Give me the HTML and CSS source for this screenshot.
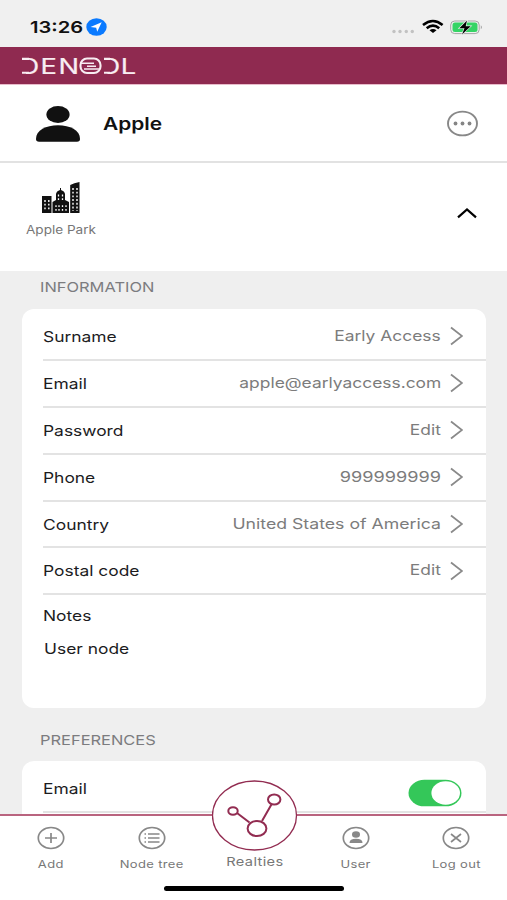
FILE: index.html
```html
<!DOCTYPE html>
<html lang="en">
<head>
<meta charset="utf-8">
<title>Denodl</title>
<link rel="stylesheet" href="styles.css">
</head>
<body>
<div class="screen">
  <div class="status">
    <div class="clock"><span class="time">13:26</span>
      <svg class="loc" viewBox="0 0 21 18" width="21" height="18"><ellipse cx="10.5" cy="9" rx="10.2" ry="8.7" fill="#0a7aff"/><path d="M4.5 9.1 15.7 4.3 11.2 13.8 10.2 9.8Z" fill="#fff"/></svg>
    </div>
    <svg viewBox="0 0 94 20" width="94" height="20">
      <g fill="#c2c2c2"><circle cx="3" cy="14.5" r="1.7"/><circle cx="9" cy="14.5" r="1.7"/><circle cx="15.3" cy="14.5" r="1.7"/><circle cx="21.3" cy="14.5" r="1.7"/></g>
      <g fill="none" stroke="#000" stroke-width="2.6"><path d="M32 8Q42 0 51.6 8"/><path d="M35.700 11.3Q42 6 48.200 11.3"/></g>
      <path d="M38.5 13.3Q42 10.8 45.5 13.3L42 16Z"/>
      <rect x="59.7" y="4" width="28.5" height="12.6" rx="4" fill="none" stroke="#a5a5a5"/>
      <rect x="61.500" y="5.6" width="25" height="9.4" rx="2.5" fill="#35d465"/>
      <path d="M89.8 8.2q2.3 2 0 4z" fill="#a5a5a5"/>
      <path d="M76 3.5 68.300 11.2H73.500L71 17.4 79.700 9.2H74.700Z" stroke="#f0f0f0" stroke-width="1.3" paint-order="stroke"/>
    </svg>
  </div>
  <header class="brand">
    <svg class="logo" viewBox="0 0 116 20" width="116" height="20" role="img" aria-label="DENODL">
      <text class="logo-text" transform="scale(1.3 1)" y="17.6" x="-1.2 15 28.8 61.2 76.7">DENDL</text>
      <path d="M-1 0H5V20H-1ZM81 0H86.500V20H81Z" fill="#8f2a50"/>
      <g fill="none" stroke="#f8edf2" stroke-width="2.100">
        <path d="M1 2.900H8M1 16.700H8M83 2.900H89M83 16.700H89"/>
        <rect x="59.500" y="2.500" width="20" height="14.500" rx="6.5"/>
        <path d="M60 7.2H73M66 10.2H75M63 13H79" stroke-width="1.4"/>
      </g>
    </svg>
  </header>
  <section class="profile">
    <svg viewBox="0 0 46 38" width="46" height="38" fill="#111"><ellipse cx="23" cy="9.5" rx="11.6" ry="8.5"/><path d="M1 34C1 25 11 20.3 23 20.3S45 25 45 34Q45 36.8 42 36.8H4Q1 36.8 1 34Z"/></svg>
    <h1><span class="wide">Apple</span></h1>
    <svg class="more" viewBox="0 0 32 27" width="32" height="27"><ellipse cx="16.500" cy="13.5" rx="14.5" ry="11.9" fill="none" stroke="#888" stroke-width="1.9"/><g fill="#858585"><circle cx="9.500" cy="13.5" r="1.9"/><circle cx="16.500" cy="13.5" r="1.9"/><circle cx="23.500" cy="13.5" r="1.9"/></g></svg>
  </section>
  <section class="place">
    <div class="park">
      <svg viewBox="0 0 38 32" width="38" height="32"><path fill="#111" d="M0 14H9.500V31H0ZM10.5 31V20L14 18V12Q14.500 9 18 8V6H19V8Q22.500 9 23 12V18L27 20V31ZM28.200 31V3Q32 1 37.500 0V31Z"/><g stroke="#fff" fill="none" stroke-dasharray="1.900 1.800"><path d="M3 18V29M6.800 18V29M31 6V29M35 6V29" stroke-width="1.400"/><path d="M14 23.200V29M17 23.200V29M20.500 23.200V29M24 23.200V29M16.500 12.500V18M20.500 12.500V18" stroke-width="1.300"/></g></svg>
      <span class="wide">Apple Park</span>
    </div>
    <svg class="up" viewBox="0 0 20 12" width="20" height="12"><path d="M1 10.300 10 2.500 19 10.300" fill="none" stroke="#000" stroke-width="2.200"/></svg>
  </section>
  <main>
    <h2><span class="wide">INFORMATION</span></h2>
    <div class="card info">
      <div class="row"><span class="wide">Surname</span><span class="value">Early Access</span><svg class="chev" viewBox="0 0 13 20"><path d="M1 1.500 12 10 1 18.500"/></svg></div>
      <div class="row"><span class="wide">Email</span><span class="value">apple@earlyaccess.com</span><svg class="chev" viewBox="0 0 13 20"><path d="M1 1.500 12 10 1 18.500"/></svg></div>
      <div class="row"><span class="wide">Password</span><span class="value">Edit</span><svg class="chev" viewBox="0 0 13 20"><path d="M1 1.500 12 10 1 18.500"/></svg></div>
      <div class="row"><span class="wide">Phone</span><span class="value digits">999999999</span><svg class="chev" viewBox="0 0 13 20"><path d="M1 1.500 12 10 1 18.500"/></svg></div>
      <div class="row"><span class="wide">Country</span><span class="value country">United States of America</span><svg class="chev" viewBox="0 0 13 20"><path d="M1 1.500 12 10 1 18.500"/></svg></div>
      <div class="row"><span class="wide">Postal code</span><span class="value">Edit</span><svg class="chev" viewBox="0 0 13 20"><path d="M1 1.500 12 10 1 18.500"/></svg></div>
      <div class="note"><span class="wide">Notes</span></div>
      <div class="note node"><span class="wide">User node</span></div>
    </div>
    <h2 class="second"><span class="wide">PREFERENCES</span></h2>
    <div class="card prefs">
      <div class="row"><span class="wide">Email</span>
        <svg class="switch" viewBox="0 0 54 28" width="54" height="28"><rect x=".5" y=".8" width="53" height="26.500" rx="16" ry="13.250" fill="#34c759"/><ellipse cx="37.700" cy="14" rx="14.300" ry="11.800" fill="#fff"/></svg>
      </div>
    </div>
  </main>
  <nav>
    <div class="tab"><svg viewBox="0 0 28 24" width="28" height="24"><ellipse cx="14" cy="12" rx="12.700" ry="10.500"/><path d="M8 12H20M14 7V17"/></svg><span>Add</span></div>
    <div class="tab"><svg viewBox="0 0 28 24" width="28" height="24"><ellipse cx="14" cy="12" rx="12.700" ry="10.500"/><path d="M10 8H21.500M10 12H21.500M10 16H21.500M6.500 8H8M6.500 12H8M6.500 16H8" stroke-width="1.400"/></svg><span>Node tree</span></div>
    <div class="tab main-tab"><svg viewBox="0 0 86 72" width="86" height="72"><ellipse cx="42.500" cy="36.500" rx="42" ry="34.500" fill="#fff" stroke-width="1.300"/><g stroke-width="2"><path d="M25 34 37.500 43.500M50 42 60 24.500"/><ellipse cx="21" cy="32" rx="4.700" ry="3.800"/><ellipse cx="62.200" cy="20.500" rx="6.200" ry="5.100"/><ellipse cx="45" cy="49.500" rx="9.400" ry="7.600"/></g></svg><span>Realties</span></div>
    <div class="tab"><svg viewBox="0 0 28 24" width="28" height="24"><ellipse cx="14" cy="12" rx="12.700" ry="10.500"/><g fill="#888" stroke="none"><ellipse cx="14" cy="8.500" rx="4" ry="3.300"/><path d="M7.500 17Q7.500 12.800 14 12.800T20.500 17Z"/></g></svg><span>User</span></div>
    <div class="tab"><svg viewBox="0 0 28 24" width="28" height="24"><ellipse cx="14" cy="12" rx="12.700" ry="10.500"/><path d="M9 8 19 16M19 8 9 16"/></svg><span>Log out</span></div>
    <i class="home"></i>
  </nav>
</div>
</body>
</html>
```

FILE: styles.css
```css
* { box-sizing: border-box; }
body { margin: 0; font-family: Inter, "Liberation Sans", sans-serif; color: #1c1c1e; background: #fff; }
svg { display: block; flex: none; }
h1, h2 { margin: 0; font-weight: 400; }
.screen { width: 507px; height: 900px; display: flex; flex-direction: column; overflow: hidden; }
.wide { display: inline-block; transform: scaleX(1.2); transform-origin: left center; white-space: nowrap; }

.status { height: 47px; flex: none; background: #f0f0f0; display: flex; justify-content: space-between; padding: 17px 22px 0 30px; }
.clock { display: flex; }
.time { width: 56px; font-size: 16.5px; font-weight: 600; line-height: 21px; color: #111; transform: scaleX(1.22); transform-origin: left center; }
.loc { margin-top: 1px; }

.brand { height: 38px; flex: none; background: #8f2a50; border-bottom: 1px solid #e8bccb; padding: 9px 0 0 21px; }
.logo { overflow: visible; }
.logo-text { font-size: 21px; font-weight: 400; fill: #f8edf2; stroke: #f8edf2; stroke-width: .2px; }

.profile { height: 78px; flex: none; border-bottom: 2px solid #e2e2e2; display: flex; align-items: center; padding: 0 29px 0 35px; }
.profile > svg:first-child { margin-top: 1px; }
h1 { margin: 1px 0 0 22px; font-size: 17.4px; font-weight: 600; line-height: 24px; color: #111; }
.more { margin-left: auto; }

.place { height: 108px; flex: none; display: flex; justify-content: space-between; padding: 19px 30px 0 26px; }
.park { display: flex; flex-direction: column; font-size: 11.3px; line-height: 16px; color: #777; }
.park svg { margin: 0 0 8px 16px; }
.up { margin-top: 25px; }

main { flex: 1; min-height: 0; overflow: hidden; background: #efefef; padding: 0 21px 0 22px; }
h2 { padding: 6px 0 0 18px; height: 37.5px; font-size: 13.7px; line-height: 20px; color: #7c7c7f; }
.second { padding-top: 22px; height: 53px; }
.card { background: #fff; border-radius: 12px; overflow: hidden; padding-left: 20.500px; font-size: 14.5px; }
.info { height: 399.5px; padding-top: 5.500px; }
.row { height: 46.9px; display: flex; align-items: center; border-bottom: 2px solid #e3e3e3; padding-right: 23px; }
.value { margin-left: auto; color: #7c7c7c; transform: scaleX(1.2); transform-origin: right center; white-space: nowrap; position: relative; top: -1px; }
.digits { transform: scaleX(1.25); }
.country { transform: scaleX(1.22); }
.chev { width: 13px; height: 20px; margin-left: 9px; fill: none; stroke: #8a8a8a; stroke-width: 1.8; }
.note { height: 33px; line-height: 33px; padding-top: 4px; }
.node { padding-left: 1px; }
.prefs { height: 70px; padding-top: 5px; }
.prefs .row { height: 47px; }
.switch { margin: 9px 1px 0 auto; }

nav { height: 86px; flex: none; position: relative; background: #fff; border-top: 2px solid #b9647f; display: grid; grid-template-columns: 102px 100px 105px 98px 102px; align-items: start; }
.tab { display: flex; flex-direction: column; align-items: center; padding-top: 10px; font-size: 10.8px; line-height: 14px; color: #777; }
.tab svg { fill: none; stroke: #888; stroke-width: 1.7; margin-bottom: 8px; }
.tab span { transform: scaleX(1.2); white-space: nowrap; letter-spacing: .3px; }
.main-tab { padding: 0; margin-top: -37px; font-size: 12.2px; }
.main-tab svg { stroke: #922c51; margin-bottom: 4px; }
.home { position: absolute; left: 164px; top: 70px; width: 180px; height: 5px; border-radius: 3px; background: #000; }
```
